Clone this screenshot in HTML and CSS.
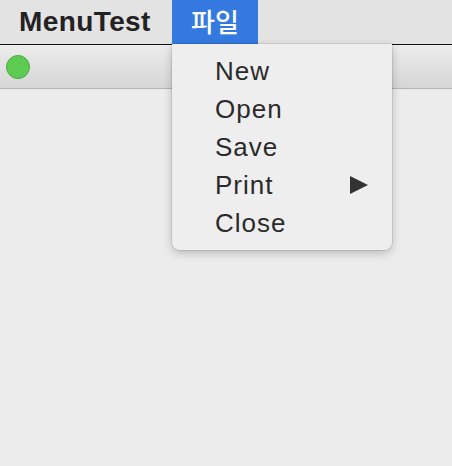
FILE: index.html
```html
<!DOCTYPE html>
<html lang="ko">
<head>
<meta charset="utf-8">
<link rel="stylesheet" href="styles.css">
</head>
<body>
<div class="menubar">
  <div class="app-name">MenuTest</div>
  <div class="menu-title active">파일</div>
</div>
<div class="window">
  <div class="titlebar">
    <span class="light"></span>
  </div>
  <div class="content"></div>
</div>
<div class="dropdown">
  <div class="item">New</div>
  <div class="item">Open</div>
  <div class="item">Save</div>
  <div class="item has-sub">Print<span class="arrow"></span></div>
  <div class="item">Close</div>
</div>
</body>
</html>
```
FILE: styles.css
```css
html, body {
  margin: 0;
  padding: 0;
  width: 452px;
  height: 466px;
  overflow: hidden;
  background: #ececec;
  font-family: "Liberation Sans", Arial, "Noto Sans CJK KR", sans-serif;
}
.menubar {
  display: flex;
  height: 44px;
  background: #e4e3e3;
  border-bottom: 1px solid #111;
}
.app-name {
  flex: none;
  padding-left: 19px;
  width: 172px;
  box-sizing: border-box;
  font-weight: bold;
  font-size: 28px;
  letter-spacing: 0.4px;
  line-height: 44px;
  color: #222;
}
.menu-title {
  flex: none;
  width: 86px;
  text-align: center;
  font-family: "Noto Sans CJK KR", sans-serif;
  font-weight: 500;
  font-size: 26px;
  line-height: 42px;
}
.menu-title.active {
  background: #3479e0;
  color: #fff;
}
.window {
  display: flex;
  flex-direction: column;
}
.titlebar {
  height: 43px;
  display: flex;
  align-items: center;
  padding-left: 6px;
  background: linear-gradient(#ececec, #d6d6d6);
  border-bottom: 1px solid #b4b4b4;
}
.light {
  width: 22px;
  height: 22px;
  border-radius: 50%;
  background: #5dcb52;
  border: 1px solid #4aab41;
}
.content {
  flex: 1;
  background: #ececec;
}
.dropdown {
  position: absolute;
  left: 172px;
  top: 44px;
  width: 220px;
  box-sizing: border-box;
  padding: 8px 0;
  background: #efeeee;
  border-radius: 0 0 8px 8px;
  box-shadow: 0 3px 10px rgba(0,0,0,0.22), 0 0 0 1px rgba(0,0,0,0.08);
}
.item {
  display: flex;
  align-items: center;
  justify-content: space-between;
  padding: 0 24px 0 43px;
  height: 38px;
  font-size: 26px;
  letter-spacing: 1px;
  color: #2a2a2a;
}
.arrow {
  width: 0;
  height: 0;
  border-top: 9px solid transparent;
  border-bottom: 9px solid transparent;
  border-left: 18px solid #333;
}
```
